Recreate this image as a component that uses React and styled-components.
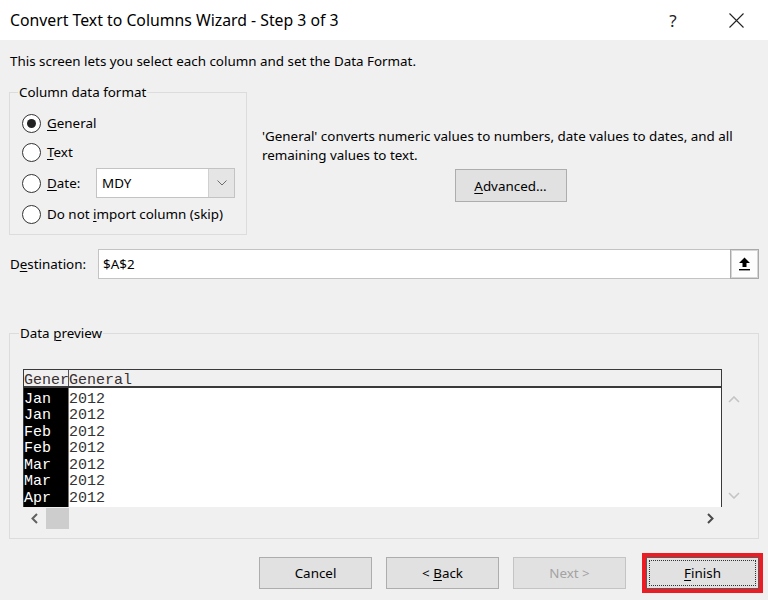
import React from "react";
import styled, { createGlobalStyle } from "styled-components";

const GlobalStyle = createGlobalStyle`
  html, body {
    margin: 0;
    padding: 0;
    background: #f0f0f0;
  }
  body {
    font-family: "Noto Sans", "Liberation Sans", sans-serif;
  }
  * {
    box-sizing: border-box;
  }
`;

const months = ["Jan", "Jan", "Feb", "Feb", "Mar", "Mar", "Apr"];

const App = () => {
  return (
    <>
      <GlobalStyle />
      <Dialog>
        <TitleBar>
          <Title>Convert Text to Columns Wizard - Step 3 of 3</Title>
          <CaptionButton>?</CaptionButton>
          <CaptionButton narrow>
            <svg width="15" height="15" viewBox="0 0 15 15">
              <path d="M0.5 0.5 L14.5 14.5 M14.5 0.5 L0.5 14.5" stroke="#222" strokeWidth="1.1" fill="none" />
            </svg>
          </CaptionButton>
        </TitleBar>

        <Body>
          <Intro>This screen lets you select each column and set the Data Format.</Intro>

          <TopRow>
            <GroupBox width="238px" height="152px" top="8px" left="12px">
              <Legend>Column data format</Legend>
              <RadioList>
                <RadioRow>
                  <Radio checked />
                  <span><Key>G</Key>eneral</span>
                </RadioRow>
                <RadioRow>
                  <Radio />
                  <span><Key>T</Key>ext</span>
                </RadioRow>
                <RadioRow tall>
                  <Radio />
                  <DateLabel><Key>D</Key>ate:</DateLabel>
                  <Combo>
                    <ComboValue>MDY</ComboValue>
                    <ComboArrow>
                      <svg width="10" height="6" viewBox="0 0 10 6">
                        <path d="M0.5 0.5 L5 5 L9.5 0.5" stroke="#6d6d6d" strokeWidth="1" fill="none" />
                      </svg>
                    </ComboArrow>
                  </Combo>
                </RadioRow>
                <RadioRow>
                  <Radio />
                  <span>Do not <Key>i</Key>mport column (skip)</span>
                </RadioRow>
              </RadioList>
            </GroupBox>

            <FormatInfo>
              <Description>
                'General' converts numeric values to numbers, date values to dates, and all remaining values to text.
              </Description>
              <Button width="112px" height="33px">
                <Key>A</Key>dvanced...
              </Button>
            </FormatInfo>
          </TopRow>

          <DestinationRow>
            <FieldLabel>D<Key>e</Key>stination:</FieldLabel>
            <TextInput>$A$2</TextInput>
            <CollapseButton>
              <svg width="13" height="14" viewBox="0 0 13 14">
                <path d="M6.5 0.5 L12 6 L8.5 6 L8.5 10 L4.5 10 L4.5 6 L1 6 Z" fill="#000" />
                <rect x="1" y="12" width="11" height="1.4" fill="#000" />
              </svg>
            </CollapseButton>
          </DestinationRow>

          <GroupBox width="750px" height="215px" top="26px" left="13px" space="45px">
            <Legend>Data <Key>p</Key>review</Legend>
            <PreviewGrid>
              <HeaderRow>
                <HeaderCell width="45px" divider>General</HeaderCell>
                <HeaderCell>General</HeaderCell>
              </HeaderRow>
              <PreviewBody>
                <DataColumn width="45px" selected>
                  {months.map((m, i) => (
                    <DataCell key={i}>{m}</DataCell>
                  ))}
                </DataColumn>
                <DataColumn>
                  {months.map((_, i) => (
                    <DataCell key={i}>2012</DataCell>
                  ))}
                </DataColumn>
              </PreviewBody>
              <VScroll>
                <ScrollArrow>
                  <svg width="12" height="7" viewBox="0 0 12 7">
                    <path d="M1 6 L6 1 L11 6" stroke="#c4c4c4" strokeWidth="1.6" fill="none" />
                  </svg>
                </ScrollArrow>
                <ScrollArrow>
                  <svg width="12" height="7" viewBox="0 0 12 7">
                    <path d="M1 1 L6 6 L11 1" stroke="#c4c4c4" strokeWidth="1.6" fill="none" />
                  </svg>
                </ScrollArrow>
              </VScroll>
              <HScroll>
                <ScrollArrow>
                  <svg width="7" height="11" viewBox="0 0 7 11">
                    <path d="M6 1 L1.5 5.5 L6 10" stroke="#606060" strokeWidth="2" fill="none" />
                  </svg>
                </ScrollArrow>
                <ScrollThumb />
                <Spacer />
                <ScrollArrow>
                  <svg width="7" height="11" viewBox="0 0 7 11">
                    <path d="M1 1 L5.5 5.5 L1 10" stroke="#4a4a4a" strokeWidth="2" fill="none" />
                  </svg>
                </ScrollArrow>
              </HScroll>
            </PreviewGrid>
          </GroupBox>

          <ButtonRow>
            <Button>Cancel</Button>
            <Button>&lt; <Key>B</Key>ack</Button>
            <Button disabled>Next &gt;</Button>
            <Button primary>
              <Key>F</Key>inish
            </Button>
          </ButtonRow>
        </Body>
      </Dialog>
    </>
  );
};

export default App;

const Dialog = styled.div`
  width: 768px;
  height: 600px;
  display: flex;
  flex-direction: column;
  background: #f0f0f0;
  color: #000;
  font-size: 13.4px;
  overflow: hidden;
`;

const TitleBar = styled.div`
  height: 40px;
  flex: none;
  display: flex;
  align-items: center;
  background: #fff;
  padding-left: 10px;
`;

const Title = styled.div`
  flex: 1;
  font-size: 15.8px;
  color: #000;
`;

const CaptionButton = styled.div`
  width: ${({ narrow }) => (narrow ? "63px" : "64px")};
  height: 40px;
  display: flex;
  align-items: center;
  justify-content: center;
  font-size: 17px;
  color: #222;
`;

const Body = styled.div`
  flex: 1;
  display: flex;
  flex-direction: column;
  padding: 11px 9px 0 9px;
`;

const Intro = styled.div`
  height: 20px;
  line-height: 20px;
  padding-left: 1px;
`;

const Key = styled.u`
  text-decoration: underline;
  text-underline-offset: 2px;
  text-decoration-thickness: 1px;
`;

const TopRow = styled.div`
  display: flex;
  margin-top: 12px;
`;

const GroupBox = styled.fieldset`
  flex: none;
  width: ${({ width }) => width};
  height: ${({ height }) => height};
  margin: ${({ space }) => space || "0"} 0 0 0;
  padding: ${({ top }) => top} 0 0 ${({ left }) => left};
  border: 1px solid #dcdcdc;
  min-width: 0;
`;

const Legend = styled.legend`
  margin-left: -4px;
  padding: 0 1px;
  line-height: 19px;
  font-size: 13.4px;
`;

const RadioList = styled.div`
  display: flex;
  flex-direction: column;
  gap: 3px;
`;

const RadioRow = styled.div`
  height: ${({ tall }) => (tall ? "30px" : "26px")};
  display: flex;
  align-items: center;
  gap: 6px;
`;

const Radio = styled.span`
  width: 19px;
  height: 19px;
  flex: none;
  border-radius: 50%;
  border: 1.5px solid #333;
  background: #fff;
  display: flex;
  align-items: center;
  justify-content: center;

  &::before {
    content: "";
    width: 9px;
    height: 9px;
    border-radius: 50%;
    background: ${({ checked }) => (checked ? "#222" : "transparent")};
  }
`;

const DateLabel = styled.span`
  width: 43px;
`;

const Combo = styled.div`
  width: 139px;
  height: 30px;
  display: flex;
  background: #fff;
  border: 1px solid #c3c3c3;
`;

const ComboValue = styled.div`
  flex: 1;
  display: flex;
  align-items: center;
  padding-left: 5px;
`;

const ComboArrow = styled.div`
  width: 26px;
  display: flex;
  align-items: center;
  justify-content: center;
  background: #e5e5e5;
  border-left: 1px solid #d0d0d0;
`;

const FormatInfo = styled.div`
  flex: 1;
  display: flex;
  flex-direction: column;
  align-items: center;
  padding: 44px 0 0 15px;
`;

const Description = styled.div`
  align-self: stretch;
  line-height: 19px;
  margin-bottom: 4px;
`;

const Button = styled.button`
  position: relative;
  width: ${({ width }) => width || "113px"};
  height: ${({ height }) => height || "32px"};
  flex: none;
  padding: 0;
  font-family: "Noto Sans", "Liberation Sans", sans-serif;
  font-size: 13.4px;
  color: #000;
  background: #e1e1e1;
  border: 1px solid ${({ primary }) => (primary ? "#5a5a5a" : "#adadad")};
  margin-left: ${({ primary }) => (primary ? "6px" : "0")};
  outline: ${({ primary }) => (primary ? "4px solid #ec1c24" : "none")};

  &:disabled {
    color: #a3a3a3;
    border-color: #c4c4c4;
  }

  &::after {
    content: "";
    display: ${({ primary }) => (primary ? "block" : "none")};
    position: absolute;
    inset: 2px;
    border: 1px dotted #333;
  }
`;

const DestinationRow = styled.div`
  display: flex;
  height: 30px;
  margin-top: 14px;
`;

const FieldLabel = styled.div`
  width: 89px;
  display: flex;
  align-items: center;
  padding-left: 1px;
`;

const TextInput = styled.div`
  flex: 1;
  display: flex;
  align-items: center;
  padding-left: 4px;
  background: #fff;
  border: 1px solid #c3c3c3;
  border-right: none;
`;

const CollapseButton = styled.div`
  width: 29px;
  display: flex;
  align-items: center;
  justify-content: center;
  background: #fdfdfd;
  border: 1px solid #a9a9a9;
  box-shadow: inset 0 0 0 1px #d6d6d6;
`;

const PreviewGrid = styled.div`
  display: grid;
  grid-template-columns: 699px 23px;
  grid-template-rows: 19px 119px 23px;
  font-family: "Liberation Mono", "DejaVu Sans Mono", monospace;
  font-size: 15px;
`;

const HeaderRow = styled.div`
  grid-column: 1;
  grid-row: 1;
  display: flex;
  background: #f0f0f0;
  border: 1px solid #3a3a3a;
  border-bottom-width: 2px;
  color: #3a3030;
`;

const HeaderCell = styled.div`
  width: ${({ width }) => width || "auto"};
  flex: ${({ width }) => (width ? "none" : "1")};
  height: 16px;
  overflow-x: clip;
  overflow-y: visible;
  white-space: nowrap;
  line-height: 14px;
  padding-top: 4px;
  border-right: ${({ divider }) => (divider ? "1px solid #555" : "none")};
`;

const PreviewBody = styled.div`
  grid-column: 1;
  grid-row: 2;
  display: flex;
  background: #fff;
  border-left: 1px solid #3a3a3a;
  border-right: 1px solid #3a3a3a;
`;

const DataColumn = styled.div`
  width: ${({ width }) => width || "auto"};
  flex: ${({ width }) => (width ? "none" : "1")};
  padding-top: 3.5px;
  background: ${({ selected }) => (selected ? "#000" : "#fff")};
  color: ${({ selected }) => (selected ? "#fff" : "#333")};
  border-right: ${({ selected }) => (selected ? "1px solid #777" : "none")};
`;

const DataCell = styled.div`
  height: 16.5px;
  line-height: 16.5px;
  white-space: nowrap;
`;

const VScroll = styled.div`
  grid-column: 2;
  grid-row: 2;
  display: flex;
  flex-direction: column;
  justify-content: space-between;
`;

const HScroll = styled.div`
  grid-column: 1;
  grid-row: 3;
  display: flex;
  background: #f0f0f0;
`;

const ScrollArrow = styled.div`
  width: 23px;
  height: 23px;
  display: flex;
  align-items: center;
  justify-content: center;
`;

const ScrollThumb = styled.div`
  width: 23px;
  margin: 1px 0;
  background: #cdcdcd;
`;

const Spacer = styled.div`
  flex: 1;
`;

const ButtonRow = styled.div`
  display: flex;
  justify-content: flex-end;
  gap: 14px;
  margin-top: 18px;
`;
